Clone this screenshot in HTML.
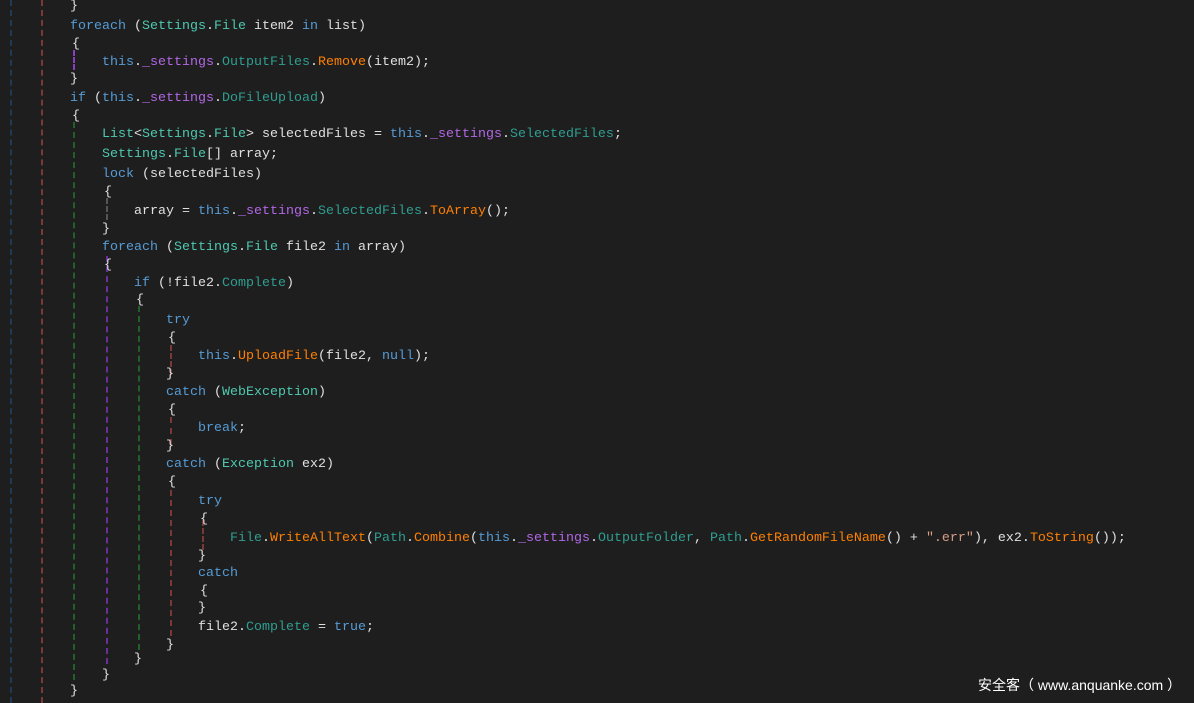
<!DOCTYPE html>
<html><head><meta charset="utf-8"><style>
body{margin:0;width:1194px;height:703px;background:#1e1e1e;overflow:hidden;position:relative;font-family:"Liberation Mono",monospace;font-size:13.33px;color:#e0e0e0}
.l{position:absolute;white-space:pre;line-height:18px;height:18px;margin-top:2px}
.k{color:#569cd6}.t{color:#4ec9b0}.p{color:#2f9e90}.m{color:#ff8000}.f{color:#b267e6}.s{color:#d69d85}
.g{position:absolute;width:0;border-left:2px dashed}
.wm{position:absolute;left:978px;top:675px;font-family:"Liberation Sans","Noto Sans CJK SC",sans-serif;font-size:14px;color:#fff;white-space:pre}
</style></head><body>
<div class="g" style="left:10px;top:0;height:703px;border-color:#1f3a55"></div>
<div class="g" style="left:41px;top:0;height:703px;border-color:#7a3838"></div>
<div class="g" style="left:73px;top:50px;height:20px;border-color:#8a3fbf"></div>
<div class="g" style="left:73px;top:122px;height:558px;border-color:#235f2a"></div>
<div class="g" style="left:106px;top:198px;height:22px;border-color:#555"></div>
<div class="g" style="left:106px;top:256px;height:408px;border-color:#6a2f9a"></div>
<div class="g" style="left:138px;top:306px;height:344px;border-color:#235f2a"></div>
<div class="g" style="left:170px;top:345px;height:30px;border-color:#7a3838"></div>
<div class="g" style="left:170px;top:417px;height:28px;border-color:#7a3838"></div>
<div class="g" style="left:170px;top:490px;height:146px;border-color:#7a3838"></div>
<div class="g" style="left:202px;top:520px;height:30px;border-color:#7a3838"></div>

<div class="l" style="left:70px;top:-4px">}</div>
<div class="l" style="left:70px;top:16px"><span class="k">foreach</span> (<span class="t">Settings</span>.<span class="t">File</span> item2 <span class="k">in</span> list)</div>
<div class="l" style="left:72px;top:34px">{</div>
<div class="l" style="left:102px;top:52px"><span class="k">this</span>.<span class="f">_settings</span>.<span class="p">OutputFiles</span>.<span class="m">Remove</span>(item2);</div>
<div class="l" style="left:70px;top:69px">}</div>
<div class="l" style="left:70px;top:88px"><span class="k">if</span> (<span class="k">this</span>.<span class="f">_settings</span>.<span class="p">DoFileUpload</span>)</div>
<div class="l" style="left:72px;top:106px">{</div>
<div class="l" style="left:102px;top:124px"><span class="t">List</span>&lt;<span class="t">Settings</span>.<span class="t">File</span>&gt; selectedFiles = <span class="k">this</span>.<span class="f">_settings</span>.<span class="p">SelectedFiles</span>;</div>
<div class="l" style="left:102px;top:144px"><span class="t">Settings</span>.<span class="t">File</span>[] array;</div>
<div class="l" style="left:102px;top:164px"><span class="k">lock</span> (selectedFiles)</div>
<div class="l" style="left:104px;top:182px">{</div>
<div class="l" style="left:134px;top:201px">array = <span class="k">this</span>.<span class="f">_settings</span>.<span class="p">SelectedFiles</span>.<span class="m">ToArray</span>();</div>
<div class="l" style="left:102px;top:219px">}</div>
<div class="l" style="left:102px;top:237px"><span class="k">foreach</span> (<span class="t">Settings</span>.<span class="t">File</span> file2 <span class="k">in</span> array)</div>
<div class="l" style="left:104px;top:255px">{</div>
<div class="l" style="left:134px;top:273px"><span class="k">if</span> (!file2.<span class="p">Complete</span>)</div>
<div class="l" style="left:136px;top:290px">{</div>
<div class="l" style="left:166px;top:310px"><span class="k">try</span></div>
<div class="l" style="left:168px;top:328px">{</div>
<div class="l" style="left:198px;top:346px"><span class="k">this</span>.<span class="m">UploadFile</span>(file2, <span class="k">null</span>);</div>
<div class="l" style="left:166px;top:364px">}</div>
<div class="l" style="left:166px;top:382px"><span class="k">catch</span> (<span class="t">WebException</span>)</div>
<div class="l" style="left:168px;top:400px">{</div>
<div class="l" style="left:198px;top:418px"><span class="k">break</span>;</div>
<div class="l" style="left:166px;top:436px">}</div>
<div class="l" style="left:166px;top:454px"><span class="k">catch</span> (<span class="t">Exception</span> ex2)</div>
<div class="l" style="left:168px;top:472px">{</div>
<div class="l" style="left:198px;top:491px"><span class="k">try</span></div>
<div class="l" style="left:200px;top:509px">{</div>
<div class="l" style="left:230px;top:528px"><span class="p">File</span>.<span class="m">WriteAllText</span>(<span class="p">Path</span>.<span class="m">Combine</span>(<span class="k">this</span>.<span class="f">_settings</span>.<span class="p">OutputFolder</span>, <span class="p">Path</span>.<span class="m">GetRandomFileName</span>() + <span class="s">".err"</span>), ex2.<span class="m">ToString</span>());</div>
<div class="l" style="left:198px;top:546px">}</div>
<div class="l" style="left:198px;top:563px"><span class="k">catch</span></div>
<div class="l" style="left:200px;top:581px">{</div>
<div class="l" style="left:198px;top:598px">}</div>
<div class="l" style="left:198px;top:617px">file2.<span class="p">Complete</span> = <span class="k">true</span>;</div>
<div class="l" style="left:166px;top:635px">}</div>
<div class="l" style="left:134px;top:649px">}</div>
<div class="l" style="left:102px;top:665px">}</div>
<div class="l" style="left:70px;top:681px">}</div>
<div class="wm">安全客（ www.anquanke.com ）</div>
</body></html>
